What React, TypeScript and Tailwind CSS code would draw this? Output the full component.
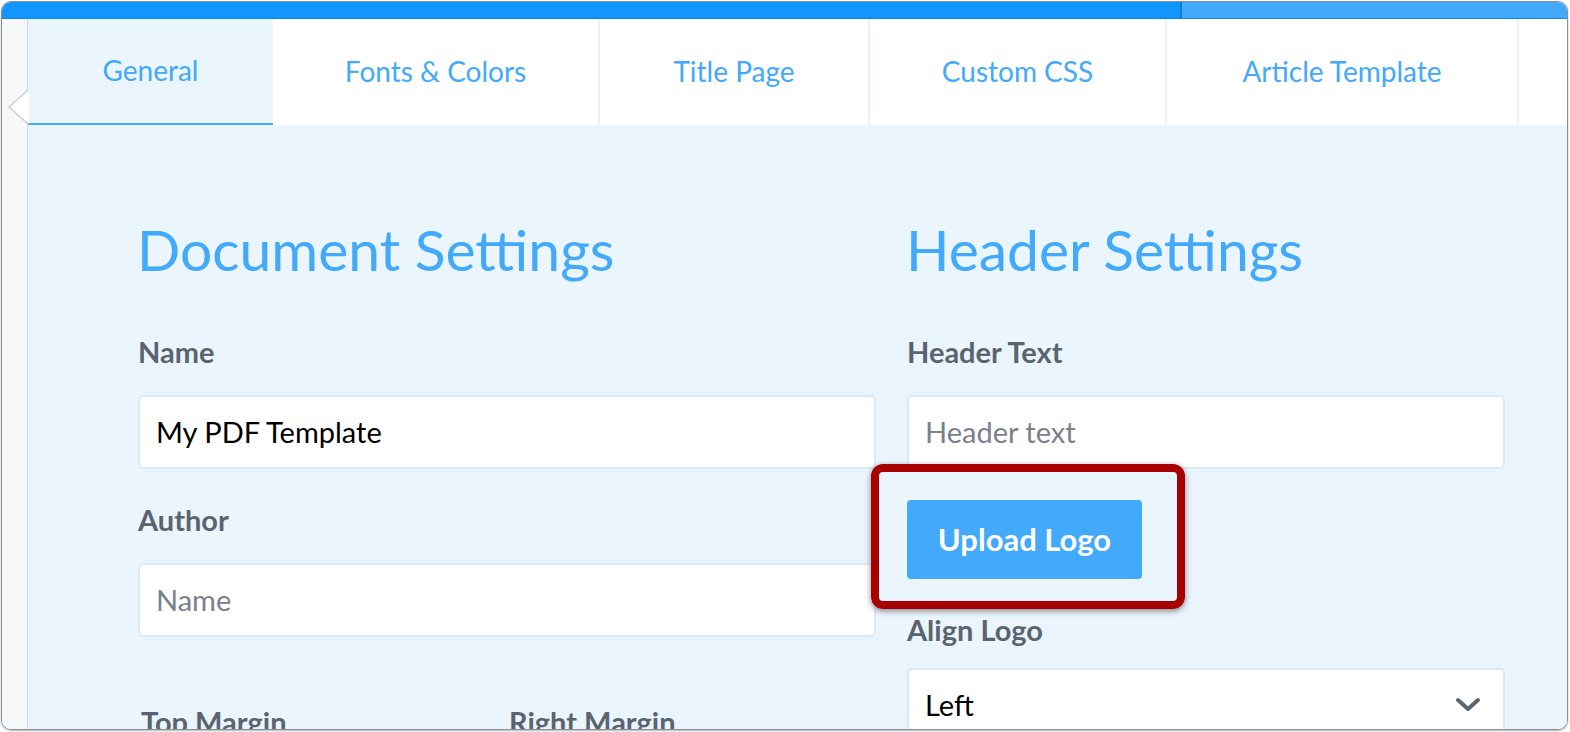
import React from 'react';

const tabs = [
  { label: 'General', w: 'w-[245px]', active: true },
  { label: 'Fonts & Colors', w: 'w-[327px]' },
  { label: 'Title Page', w: 'w-[270px]' },
  { label: 'Custom CSS', w: 'w-[297px]' },
  { label: 'Article Template', w: 'w-[352px]' },
];

function ChevronDown() {
  return (
    <svg width="26" height="16" viewBox="0 0 26 16" className="text-[#5b6470]">
      <path d="M3 3 L13 12 L23 3" fill="none" stroke="currentColor" strokeWidth="4" strokeLinecap="round" strokeLinejoin="round" />
    </svg>
  );
}

export default function App() {
  return (
    <div className="w-[1570px] h-[732px] bg-white p-px font-['Lato',sans-serif] overflow-hidden">
      <div className="w-[1567px] h-[729px] rounded-[10px] border border-[#8a8f96] overflow-hidden flex flex-col shadow-[0_1px_2px_rgba(0,0,0,0.3)]">
        {/* Top bar */}
        <div className="h-[17px] flex shrink-0 border-b border-[#0e88e8]">
          <div className="w-[1180px] bg-[#1096fc] border-r-2 border-[#0b7fd8]" />
          <div className="flex-1 bg-[#42a9fb]" />
        </div>

        <div className="flex flex-1 min-h-0">
          {/* Left gutter */}
          <div className="relative w-[26px] shrink-0 bg-[#f6f8fa] border-r border-[#d3d8de]">
            <div className="absolute left-[6px] top-[70px] w-0 h-0 border-y-[18px] border-y-transparent border-r-[20px] border-r-[#c9ced4]" />
            <div className="absolute left-[8px] top-[71px] w-0 h-0 border-y-[17px] border-y-transparent border-r-[19px] border-r-white" />
          </div>

          <div className="flex-1 flex flex-col min-w-0">
            {/* Tabs */}
            <div className="h-[106px] flex shrink-0 bg-white">
              {tabs.map((t) => (
                <div
                  key={t.label}
                  className={`${t.w} shrink-0 flex items-center justify-center pb-[2px] text-[28px] text-[#42a9fb] ${
                    t.active
                      ? 'bg-[#eaf5fd] border-b-2 border-[#42a9fb]'
                      : 'border-r-2 border-[#e6f2fc]'
                  }`}
                >
                  {t.label}
                </div>
              ))}
              <div className="flex-1" />
            </div>

            {/* Content */}
            <div className="flex-1 bg-[#eaf5fd] pl-[110px] pt-[92px] flex gap-[31px]">
              {/* Document settings */}
              <div className="w-[738px] flex flex-col">
                <h1 className="text-[57px] leading-[64px] text-[#42a9fb] -ml-px">Document Settings</h1>
                <label className="mt-[53px] text-[29px] leading-[36px] font-bold text-[#5a6470]">Name</label>
                <div className="mt-[25px] h-[74px] bg-white border-2 border-[#d8eafa] rounded-[5px] flex items-center px-[16px] text-[29px] text-black">
                  My PDF Template
                </div>
                <label className="mt-[33px] text-[29px] leading-[36px] font-bold text-[#5a6470]">Author</label>
                <div className="mt-[25px] h-[74px] bg-white border-2 border-[#d8eafa] rounded-[5px] flex items-center px-[16px] text-[29px] text-[#7b8089]">
                  Name
                </div>
                <div className="mt-[67px] flex text-[29px] leading-[36px] font-bold text-[#5a6470]">
                  <span className="w-[371px] pl-[3px]">Top Margin</span>
                  <span>Right Margin</span>
                </div>
              </div>

              {/* Header settings */}
              <div className="w-[598px] flex flex-col">
                <h1 className="text-[57px] leading-[64px] text-[#42a9fb] -ml-px">Header Settings</h1>
                <label className="mt-[53px] text-[29px] leading-[36px] font-bold text-[#5a6470]">Header Text</label>
                <div className="mt-[25px] h-[74px] bg-white border-2 border-[#d8eafa] rounded-[5px] flex items-center px-[16px] text-[29px] text-[#7b8089]">
                  Header text
                </div>
                <div className="relative mt-[31px] self-start">
                  <button className="w-[235px] h-[79px] bg-[#42a9fb] rounded-[4px] text-white text-[31px] font-bold">
                    Upload Logo
                  </button>
                  <div className="absolute -left-[36px] -top-[36px] w-[314px] h-[145px] rounded-[12px] border-[8px] border-[#a70000] shadow-[0_2px_6px_rgba(0,0,0,0.45)]" />
                </div>
                <label className="mt-[33px] text-[29px] leading-[36px] font-bold text-[#5a6470]">Align Logo</label>
                <div className="mt-[20px] h-[74px] bg-white border-2 border-[#d8eafa] rounded-[5px] flex items-center justify-between pl-[16px] pr-[22px] text-[29px] text-black">
                  <span>Left</span>
                  <ChevronDown />
                </div>
              </div>
            </div>
          </div>
        </div>
      </div>
    </div>
  );
}
